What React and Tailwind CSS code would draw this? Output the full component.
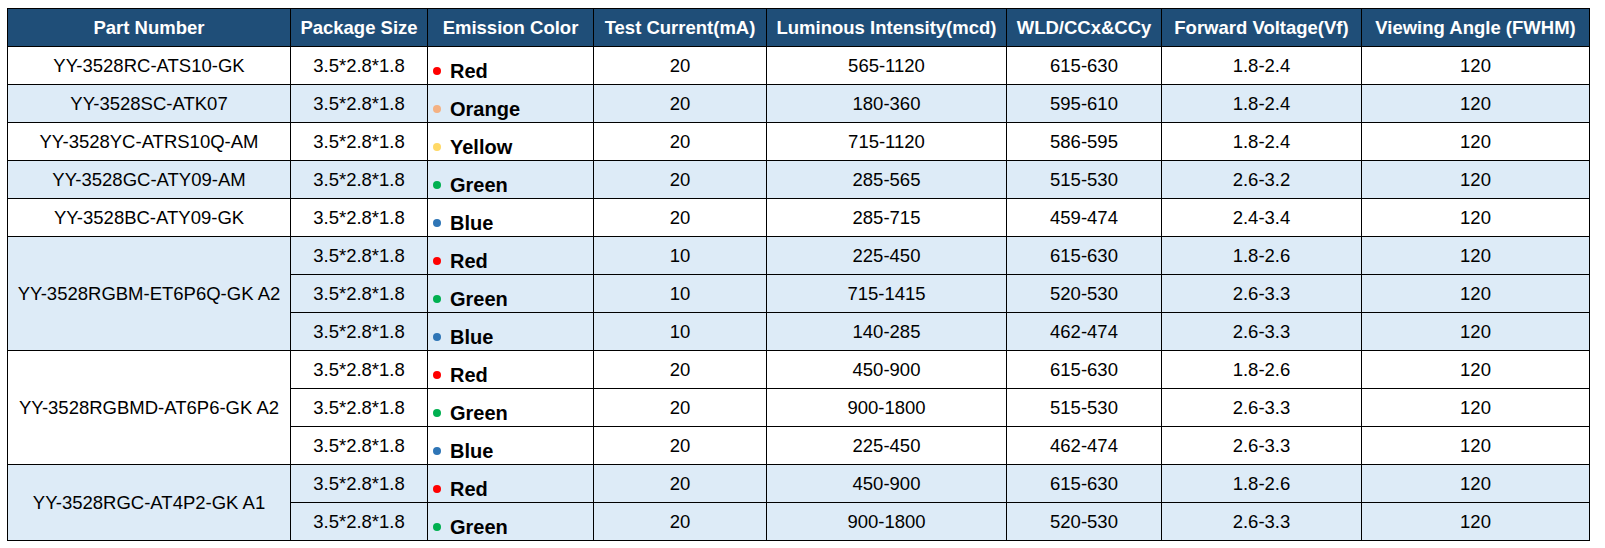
import React from "react";

const DOT = {
  Red: "bg-[#ff0000]",
  Orange: "bg-[#f4b183]",
  Yellow: "bg-[#ffd966]",
  Green: "bg-[#00b050]",
  Blue: "bg-[#2e75b6]",
};

const groups = [
  { part: "YY-3528RC-ATS10-GK", blue: false, rows: [["Red", "20", "565-1120", "615-630", "1.8-2.4"]] },
  { part: "YY-3528SC-ATK07", blue: true, rows: [["Orange", "20", "180-360", "595-610", "1.8-2.4"]] },
  { part: "YY-3528YC-ATRS10Q-AM", blue: false, rows: [["Yellow", "20", "715-1120", "586-595", "1.8-2.4"]] },
  { part: "YY-3528GC-ATY09-AM", blue: true, rows: [["Green", "20", "285-565", "515-530", "2.6-3.2"]] },
  { part: "YY-3528BC-ATY09-GK", blue: false, rows: [["Blue", "20", "285-715", "459-474", "2.4-3.4"]] },
  {
    part: "YY-3528RGBM-ET6P6Q-GK A2",
    blue: true,
    rows: [
      ["Red", "10", "225-450", "615-630", "1.8-2.6"],
      ["Green", "10", "715-1415", "520-530", "2.6-3.3"],
      ["Blue", "10", "140-285", "462-474", "2.6-3.3"],
    ],
  },
  {
    part: "YY-3528RGBMD-AT6P6-GK A2",
    blue: false,
    rows: [
      ["Red", "20", "450-900", "615-630", "1.8-2.6"],
      ["Green", "20", "900-1800", "515-530", "2.6-3.3"],
      ["Blue", "20", "225-450", "462-474", "2.6-3.3"],
    ],
  },
  {
    part: "YY-3528RGC-AT4P2-GK A1",
    blue: true,
    rows: [
      ["Red", "20", "450-900", "615-630", "1.8-2.6"],
      ["Green", "20", "900-1800", "520-530", "2.6-3.3"],
    ],
  },
];

const headers = [
  "Part Number",
  "Package Size",
  "Emission Color",
  "Test Current(mA)",
  "Luminous Intensity(mcd)",
  "WLD/CCx&CCy",
  "Forward Voltage(Vf)",
  "Viewing Angle (FWHM)",
];

const widths = [283, 137, 166, 173, 240, 155, 200, 228];

const td = "border border-black text-center align-middle p-0 text-[18.5px] text-black whitespace-nowrap";

export default function App() {
  return (
    <div className="bg-white w-[1605px] h-[548px] pl-[7px] pt-[8px]" style={{ fontFamily: '"Liberation Sans", Arial, sans-serif' }}>
      <table className="border-collapse table-fixed w-[1583px]">
        <colgroup>
          {widths.map((w, i) => (
            <col key={i} style={{ width: w }} />
          ))}
        </colgroup>
        <thead>
          <tr className="h-[38px] bg-[#1f4e78]">
            {headers.map((h) => (
              <th key={h} className="border border-black text-center align-middle p-0 text-[18.5px] font-bold text-white whitespace-nowrap">
                {h}
              </th>
            ))}
          </tr>
        </thead>
        <tbody>
          {groups.map((g) =>
            g.rows.map((r, i) => (
              <tr key={g.part + i} className={"h-[38px] " + (g.blue ? "bg-[#ddebf7]" : "bg-white")}>
                {i === 0 && (
                  <td rowSpan={g.rows.length} className={td}>
                    {g.part}
                  </td>
                )}
                <td className={td}>3.5*2.8*1.8</td>
                <td className="border border-black align-middle p-0">
                  <div className="flex items-center pl-[5px] pt-[11px]">
                    <span className={"w-[8px] h-[8px] rounded-full shrink-0 " + DOT[r[0]]} />
                    <span className="ml-[9px] text-[20px] leading-[20px] font-bold text-black">{r[0]}</span>
                  </div>
                </td>
                <td className={td}>{r[1]}</td>
                <td className={td}>{r[2]}</td>
                <td className={td}>{r[3]}</td>
                <td className={td}>{r[4]}</td>
                <td className={td}>120</td>
              </tr>
            ))
          )}
        </tbody>
      </table>
    </div>
  );
}
